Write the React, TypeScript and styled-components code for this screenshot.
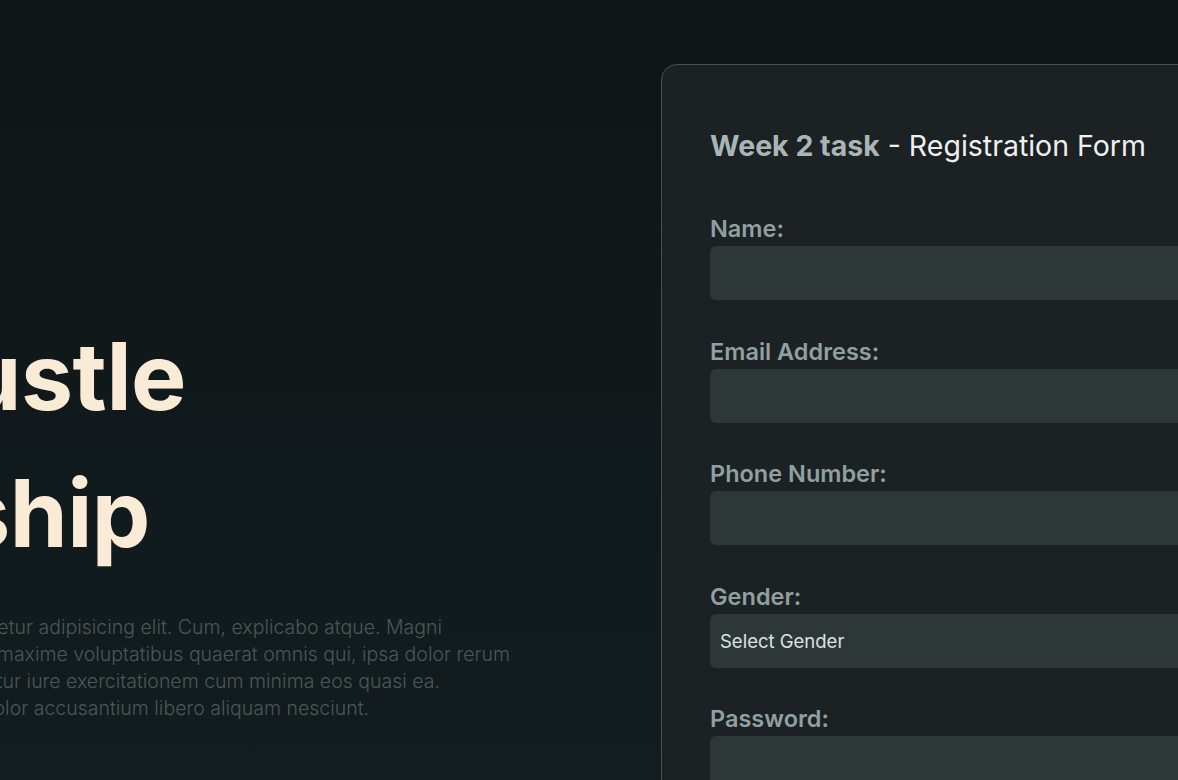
import React from "react";
import styled, { createGlobalStyle } from "styled-components";

const GlobalStyle = createGlobalStyle`
  html, body {
    margin: 0;
    overflow: hidden;
  }
  body {
    background: linear-gradient(180deg, #0e1517 0%, #111a1c 60%, #131d1f 100%);
    font-family: Inter, "Open Sans", sans-serif;
    min-height: 100vh;
  }
  * { box-sizing: border-box; }
`;

const Page = styled.main`
  display: flex;
  align-items: flex-start;
  min-height: 100vh;
`;

const Hero = styled.section`
  flex: 0 0 661px;
  overflow: hidden;
  padding-top: 308px;
`;

/* one line of the hero copy; $end is where its right edge lands, the start runs off the screen */
const Line = styled.span<{ $end: number }>`
  display: flex;
  justify-content: flex-end;
  width: ${(p) => p.$end}px;

  & > span {
    flex-shrink: 0;
    white-space: nowrap;
  }
`;

const Heading = styled.h1`
  margin: 0;
  font-size: 93px;
  font-weight: 700;
  line-height: 137px;
  letter-spacing: -0.5px;
  color: #faebd7;
`;

const Intro = styled.p`
  margin: 32px 0 0;
  font-size: 19.5px;
  font-weight: 300;
  line-height: 27px;
  color: #4b5757;
`;

const Card = styled.section`
  flex: 0 0 620px;
  margin-top: 64px;
  padding: 61px 48px 60px;
  background: #1c2123;
  border: 1px solid #465052;
  border-radius: 16px;
`;

const Title = styled.h2`
  margin: 0 0 49px;
  font-size: 28.5px;
  font-weight: 400;
  line-height: 40px;
  color: #eef0f0;

  strong {
    font-weight: 700;
    color: #a8b6b7;
  }
`;

const Field = styled.div`
  display: flex;
  flex-direction: column;
  margin-bottom: 37.5px;
`;

const Label = styled.label`
  font-size: 23.5px;
  font-weight: 600;
  line-height: 28px;
  margin-bottom: 3px;
  color: #90a0a0;
`;

const Input = styled.input`
  height: 54px;
  width: 100%;
  border: none;
  border-radius: 6px;
  background: #2e3738;
  color: #e4e6e6;
  font-family: inherit;
  font-size: 19px;
  padding: 0 10px;
  outline: none;
`;

const Select = styled.select`
  height: 54px;
  width: 100%;
  border: none;
  border-radius: 6px;
  background: #2e3738;
  color: #dfe2e2;
  font-family: inherit;
  font-size: 18.5px;
  font-weight: 400;
  padding: 0 6px;
  outline: none;
`;

const headline = [
  { text: "Side Hustle", end: 186 },
  { text: "Internship", end: 150 },
];

const intro = [
  { text: "Lorem ipsum dolor sit amet consectetur adipisicing elit. Cum, explicabo atque. Magni", end: 442 },
  { text: "nihil eveniet maxime voluptatibus quaerat omnis qui, ipsa dolor rerum", end: 510 },
  { text: "tempora consequatur iure exercitationem cum minima eos quasi ea.", end: 440 },
  { text: "Dolores ipsum dolor accusantium libero aliquam nesciunt.", end: 369 },
];

const fields = [
  { id: "name", label: "Name:", type: "text" },
  { id: "email", label: "Email Address:", type: "email" },
  { id: "phone", label: "Phone Number:", type: "tel" },
  { id: "gender", label: "Gender:", type: "select" },
  { id: "password", label: "Password:", type: "password" },
];

export default function App() {
  return (
    <>
      <GlobalStyle />
      <Page>
        <Hero>
          <Heading>
            {headline.map((l) => (
              <Line key={l.text} $end={l.end}>
                <span>{l.text}</span>
              </Line>
            ))}
          </Heading>
          <Intro>
            {intro.map((l) => (
              <Line key={l.text} $end={l.end}>
                <span>{l.text}</span>
              </Line>
            ))}
          </Intro>
        </Hero>

        <Card>
          <Title>
            <strong>Week 2 task</strong> - Registration Form
          </Title>
          <form>
            {fields.map((f) => (
              <Field key={f.id}>
                <Label htmlFor={f.id}>{f.label}</Label>
                {f.type === "select" ? (
                  <Select id={f.id} defaultValue="">
                    <option value="">Select Gender</option>
                    <option value="male">Male</option>
                    <option value="female">Female</option>
                  </Select>
                ) : (
                  <Input id={f.id} type={f.type} />
                )}
              </Field>
            ))}
          </form>
        </Card>
      </Page>
    </>
  );
}
